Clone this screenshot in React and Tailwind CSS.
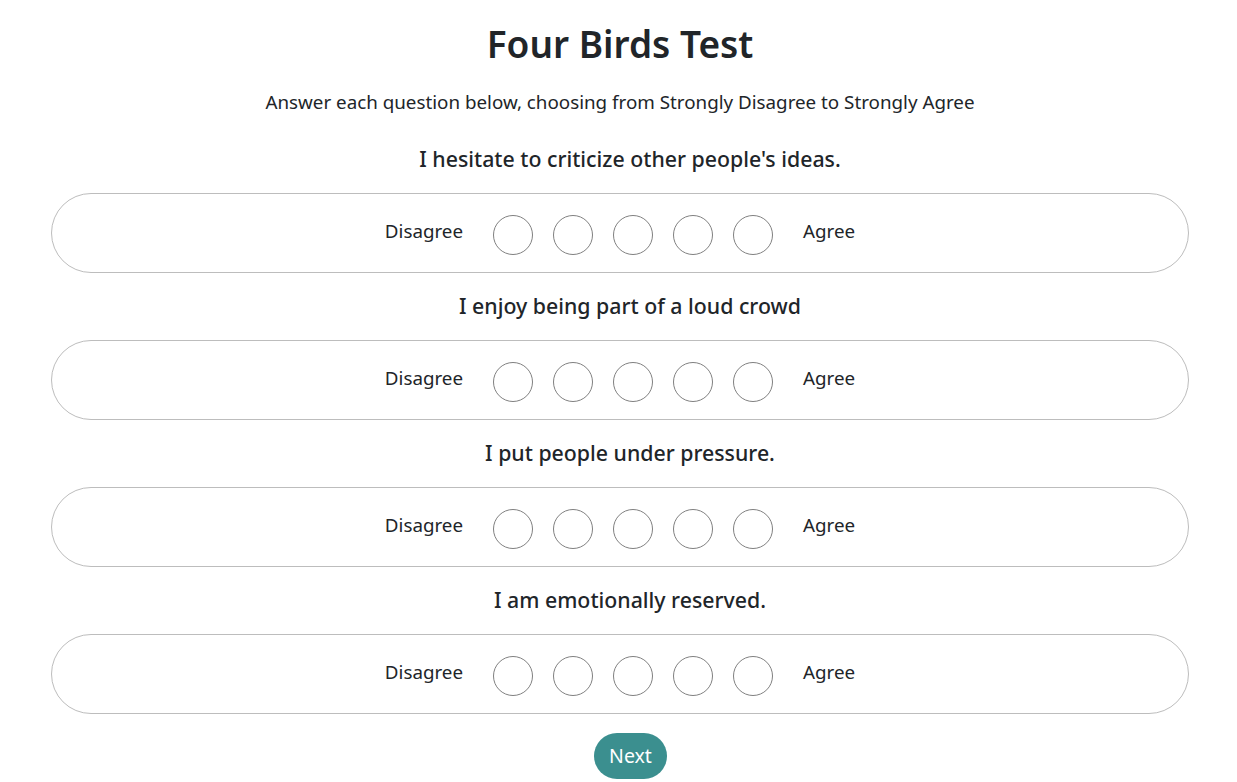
import React, { useState } from 'react';

const questions = [
    "I hesitate to criticize other people's ideas.",
    'I enjoy being part of a loud crowd',
    'I put people under pressure.',
    'I am emotionally reserved.',
];

const Scale = ({ value, onPick }) => (
    <div className="h-[80px] rounded-full border border-[#bdbdbd] flex items-center justify-center">
        <span className="text-[18.8px] mr-[20px] mb-[3px]">Disagree</span>
        {[1, 2, 3, 4, 5].map((n) => (
            <button
                key={n}
                onClick={() => onPick(n)}
                className={`w-10 h-10 mx-[10px] mt-[3px] rounded-full border border-[#808080] ${value === n ? 'bg-[#3b8f8f]' : 'bg-white'}`}
            />
        ))}
        <span className="text-[18.8px] ml-[20px] mb-[3px]">Agree</span>
    </div>
);

const App = () => {
    const [answers, setAnswers] = useState({});

    return (
        <div className="min-h-screen bg-white text-[#212529] font-['Noto_Sans',sans-serif]">
            <div className="ml-[51px] w-[1138px] pt-[20px] text-center">
                <h1 className="text-[37px] leading-[48px] font-semibold">Four Birds Test</h1>
                <p className="mt-[20px] text-[18.8px] leading-[28px]">
                    Answer each question below, choosing from Strongly Disagree to Strongly Agree
                </p>

                <div className="mt-[29px]">
                    {questions.map((q, i) => (
                        <div key={i} className="mb-[19px]">
                            <h5 className="pl-[20px] text-[21.3px] leading-[28px] font-medium mb-[20px]">{q}</h5>
                            <Scale
                                value={answers[i]}
                                onPick={(n) => setAnswers({ ...answers, [i]: n })}
                            />
                        </div>
                    ))}
                </div>

                <button className="ml-[21px] w-[73px] h-[46px] rounded-full bg-[#3b8f8f] text-white text-[19.5px]">
                    Next
                </button>
            </div>
        </div>
    );
};

export default App;
